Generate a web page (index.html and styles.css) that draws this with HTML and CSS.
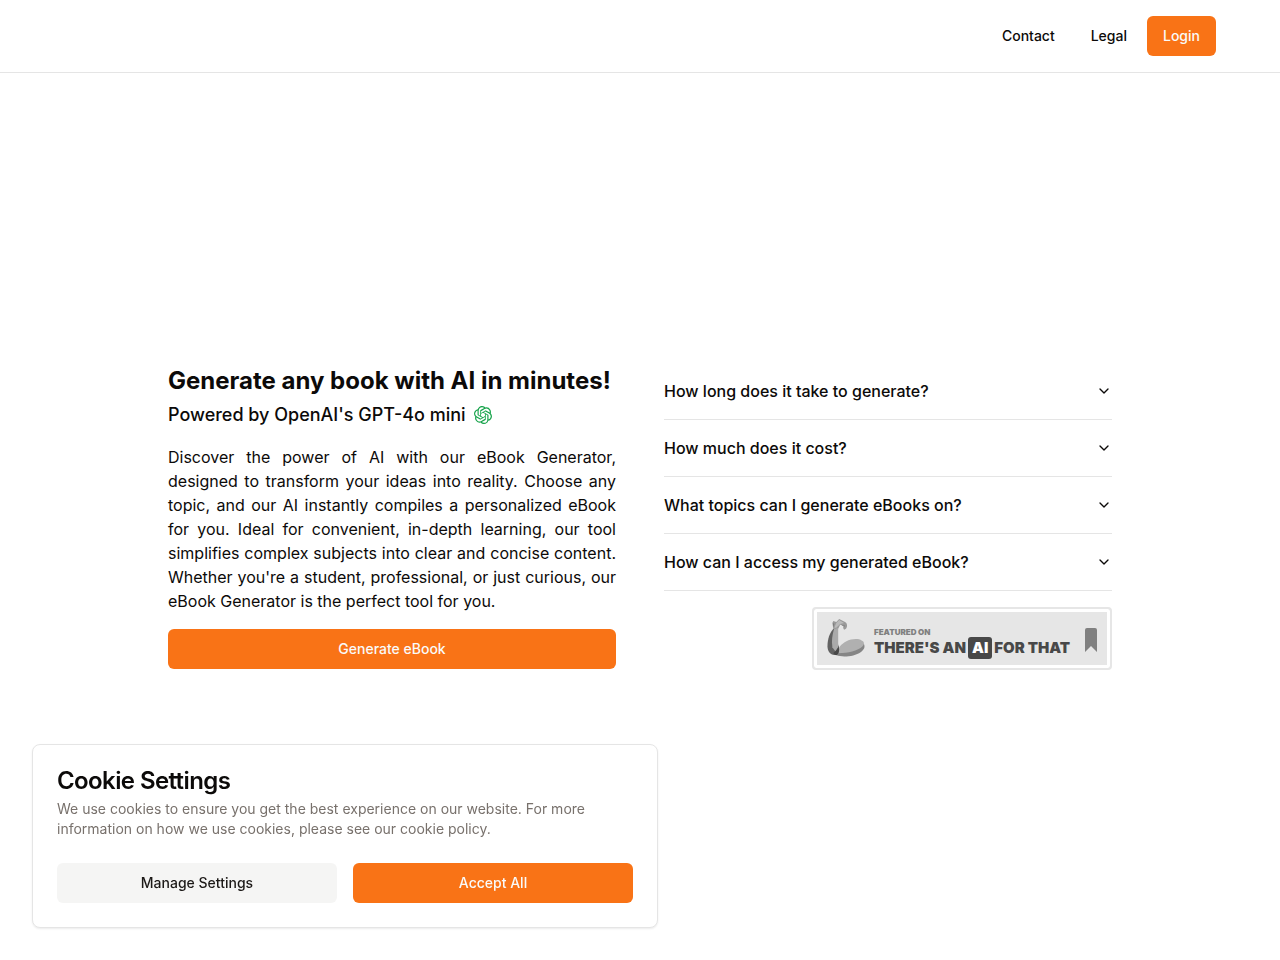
FILE: index.html
```html
<!DOCTYPE html>
<html lang="en">
<head>
<meta charset="utf-8">
<meta name="viewport" content="width=device-width, initial-scale=1">
<title>eBook Generator</title>
<link rel="stylesheet" href="styles.css">
</head>
<body>
<header class="header">
  <nav class="nav">
    <a class="nav-link" href="#contact">Contact</a>
    <a class="nav-link" href="#legal">Legal</a>
    <a class="nav-link nav-login" href="#login">Login</a>
  </nav>
</header>
<main class="main">
  <div class="columns">
    <section class="intro">
      <h1 class="title">Generate any book with AI in minutes!</h1>
      <p class="powered">Powered by OpenAI's GPT-4o mini
        <svg class="openai" viewBox="0 0 24 24" aria-hidden="true"><path d="M22.2819 9.8211a5.9847 5.9847 0 0 0-.5157-4.9108 6.0462 6.0462 0 0 0-6.5098-2.9A6.0651 6.0651 0 0 0 4.9807 4.1818a5.9847 5.9847 0 0 0-3.9977 2.9 6.0462 6.0462 0 0 0 .7427 7.0966 5.98 5.98 0 0 0 .511 4.9107 6.051 6.051 0 0 0 6.5146 2.9001A5.9847 5.9847 0 0 0 13.2599 24a6.0557 6.0557 0 0 0 5.7718-4.2058 5.9894 5.9894 0 0 0 3.9977-2.9001 6.0557 6.0557 0 0 0-.7475-7.0729zm-9.022 12.6081a4.4755 4.4755 0 0 1-2.8764-1.0408l.1419-.0804 4.7783-2.7582a.7948.7948 0 0 0 .3927-.6813v-6.7369l2.02 1.1686a.071.071 0 0 1 .038.052v5.5826a4.504 4.504 0 0 1-4.4945 4.4944zm-9.6607-4.1254a4.4708 4.4708 0 0 1-.5346-3.0137l.142.0852 4.783 2.7582a.7712.7712 0 0 0 .7806 0l5.8428-3.3685v2.3324a.0804.0804 0 0 1-.0332.0615L9.74 19.9502a4.4992 4.4992 0 0 1-6.1408-1.6464zM2.3408 7.8956a4.485 4.485 0 0 1 2.3655-1.9728V11.6a.7664.7664 0 0 0 .3879.6765l5.8144 3.3543-2.0201 1.1685a.0757.0757 0 0 1-.071 0l-4.8303-2.7865A4.504 4.504 0 0 1 2.3408 7.872zm16.5963 3.8558L13.1038 8.364 15.1192 7.2a.0757.0757 0 0 1 .071 0l4.8303 2.7913a4.4944 4.4944 0 0 1-.6765 8.1042v-5.6772a.79.79 0 0 0-.407-.667zm2.0107-3.0231l-.142-.0852-4.7735-2.7818a.7759.7759 0 0 0-.7854 0L9.409 9.2297V6.8974a.0662.0662 0 0 1 .0284-.0615l4.8303-2.7866a4.4992 4.4992 0 0 1 6.6802 4.66zM8.3065 12.863l-2.02-1.1638a.0804.0804 0 0 1-.038-.0567V6.0742a4.4992 4.4992 0 0 1 7.3757-3.4537l-.142.0805L8.704 5.459a.7948.7948 0 0 0-.3927.6813zm1.0976-2.3654l2.602-1.4998 2.6069 1.4998v2.9994l-2.5974 1.4997-2.6067-1.4997Z"/></svg>
      </p>
      <p class="description">Discover the power of AI with our eBook Generator, designed to transform your ideas into reality. Choose any topic, and our AI instantly compiles a personalized eBook for you. Ideal for convenient, in-depth learning, our tool simplifies complex subjects into clear and concise content. Whether you're a student, professional, or just curious, our eBook Generator is the perfect tool for you.</p>
      <button class="button button-primary" type="button">Generate eBook</button>
    </section>
    <section class="faq">
      <div class="accordion">
        <button class="question" type="button" aria-expanded="false">How long does it take to generate?<svg class="chevron" viewBox="0 0 24 24" aria-hidden="true"><path d="m6 9 6 6 6-6"/></svg></button>
        <button class="question" type="button" aria-expanded="false">How much does it cost?<svg class="chevron" viewBox="0 0 24 24" aria-hidden="true"><path d="m6 9 6 6 6-6"/></svg></button>
        <button class="question" type="button" aria-expanded="false">What topics can I generate eBooks on?<svg class="chevron" viewBox="0 0 24 24" aria-hidden="true"><path d="m6 9 6 6 6-6"/></svg></button>
        <button class="question" type="button" aria-expanded="false">How can I access my generated eBook?<svg class="chevron" viewBox="0 0 24 24" aria-hidden="true"><path d="m6 9 6 6 6-6"/></svg></button>
      </div>
      <a class="badge" href="#featured">
        <svg class="arm" viewBox="0 0 40 40" aria-hidden="true">
          <path fill="#858585" d="M10 35c8-1 20-3 28-10 2 3 1 6-3 9-6 4-18 6-25 3z"/>
          <path fill="#b0b0b0" d="M12 33c0-4 3-7 8-10 6-3 13-3 16-1 3 1 3 4 1 6-5 5-15 7-25 7z"/>
          <path fill="#626262" d="M8 9C3 14 1 21 1 28c0 5 3 9 7 9 3 0 5-2 5-6z"/>
          <path fill="#aaa" d="M8 9c-2 7-3 13-2 20l3 4 3-4V10z"/>
          <path fill="#484848" d="M12 27c0 5-3 6-5 8l2 2c3 1 5-4 3-10z"/>
          <path fill="#999" d="M7 10 6 4 7 2l3 1 3-3 6 3c2 1 3 4 1 7l-2 1-1-2 1-2-4-1-2 4z"/>
          <path fill="#bababa" d="m10 4 3-3 5 3-4 1-4 4H8z"/>
          <path fill="#707070" d="m7 4 1 1-1 4zm8 2 4 1-1 1z"/>
        </svg>
        <span class="badge-text">
          <span class="badge-small">FEATURED ON</span>
          <span class="badge-large">THERE'S AN<span class="badge-ai">AI</span>FOR THAT</span>
        </span>
        <svg class="bookmark" viewBox="0 0 12 24" aria-hidden="true"><path d="M0 2Q0 0 2 0h8q2 0 2 2v22l-6-6-6 6z"/></svg>
      </a>
    </section>
  </div>
</main>
<aside class="cookies" aria-labelledby="cookie-title">
  <h2 class="cookie-title" id="cookie-title">Cookie Settings</h2>
  <p class="cookie-text">We use cookies to ensure you get the best experience on our website. For more information on how we use cookies, please see our cookie policy.</p>
  <div class="cookie-actions">
    <button class="button button-secondary" type="button">Manage Settings</button>
    <button class="button button-primary" type="button">Accept All</button>
  </div>
</aside>
</body>
</html>
```
FILE: styles.css
```css
* { box-sizing: border-box; }

body {
  margin: 0;
  min-height: 100vh;
  display: flex;
  flex-direction: column;
  background: #fff;
  color: #0c0a09;
  font-family: Inter, "Liberation Sans", sans-serif;
  font-size: 16px;
  line-height: 24px;
}

h1, h2, p { margin: 0; }

button { font-family: inherit; cursor: pointer; }

.header {
  padding: 16px 64px;
  border-bottom: 1px solid #e5e5e5;
}

.nav { display: flex; justify-content: flex-end; gap: 4px; }

.nav-link {
  padding: 10px 16px;
  border-radius: 6px;
  color: #0c0a09;
  font-size: 14px;
  font-weight: 500;
  line-height: 20px;
  text-decoration: none;
}

.nav-login { background: #f97316; color: #fafaf9; }

.main {
  flex: 1;
  display: flex;
  align-items: center;
  justify-content: center;
  padding: 0 32px;
}

.columns {
  display: grid;
  grid-template-columns: 1fr 1fr;
  align-items: center;
  gap: 48px;
  width: 100%;
  max-width: 944px;
}

.intro { display: flex; flex-direction: column; }

.title { font-size: 24px; font-weight: 700; line-height: 32px; }

.powered {
  display: flex;
  align-items: center;
  gap: 8px;
  margin: 4px 0 16px;
  font-size: 18px;
  font-weight: 500;
  line-height: 28px;
}

.openai { width: 18px; height: 18px; fill: #16a34a; }

.description { margin-bottom: 16px; text-align: justify; }

.button {
  width: 100%;
  padding: 10px 16px;
  border: 0;
  border-radius: 6px;
  font-size: 14px;
  font-weight: 500;
  line-height: 20px;
}

.button-primary { background: #f97316; color: #fafaf9; }
.button-secondary { background: #f5f5f4; color: #1c1917; }

.faq { display: flex; flex-direction: column; gap: 16px; }

.accordion { display: flex; flex-direction: column; }

.question {
  display: flex;
  align-items: center;
  justify-content: space-between;
  padding: 16px 0;
  border: 0;
  border-bottom: 1px solid #e5e5e5;
  background: none;
  color: #0c0a09;
  font-size: 16px;
  font-weight: 500;
  line-height: 24px;
  text-align: left;
}

.chevron {
  width: 16px;
  height: 16px;
  fill: none;
  stroke: currentColor;
  stroke-width: 2;
  stroke-linecap: round;
  stroke-linejoin: round;
}

.badge {
  align-self: flex-end;
  display: flex;
  align-items: center;
  width: 300px;
  padding: 8px 10px;
  border: 2px solid #e6e6e6;
  border-radius: 4px;
  background: #e6e6e6;
  box-shadow: inset 0 0 0 3px #fff;
  color: #484848;
  text-decoration: none;
}

.arm { flex: none; width: 44px; height: 39px; padding: 0 2px; }

.badge-text {
  flex: 1;
  display: flex;
  flex-direction: column;
  padding: 10px 0 1px 6px;
  font-family: Inter, sans-serif;
  font-weight: 900;
  white-space: nowrap;
}

.badge-small { color: #808080; font-size: 8px; line-height: 10px; }

.badge-large { display: flex; align-items: center; font-size: 15px; line-height: 22px; }

.badge-ai {
  margin: 0 2px;
  padding: 0 4px;
  border-radius: 3px;
  background: #484848;
  color: #fff;
}

.bookmark { flex: none; width: 16px; height: 24px; margin: 2px 1px 0 0; padding: 0 2px; fill: #808080; }

.cookies {
  position: fixed;
  bottom: 32px;
  left: 32px;
  max-width: 626px;
  padding: 24px;
  border: 1px solid #e5e5e5;
  border-radius: 8px;
  background: #fff;
  box-shadow: 0 1px 2px rgba(0, 0, 0, 0.08);
}

.cookie-title {
  margin-bottom: 6px;
  font-size: 24px;
  font-weight: 600;
  line-height: 24px;
  letter-spacing: -0.025em;
}

.cookie-text { color: #78716c; font-size: 14px; line-height: 20px; }

.cookie-actions {
  display: grid;
  grid-template-columns: 1fr 1fr;
  gap: 16px;
  margin-top: 24px;
}
```
